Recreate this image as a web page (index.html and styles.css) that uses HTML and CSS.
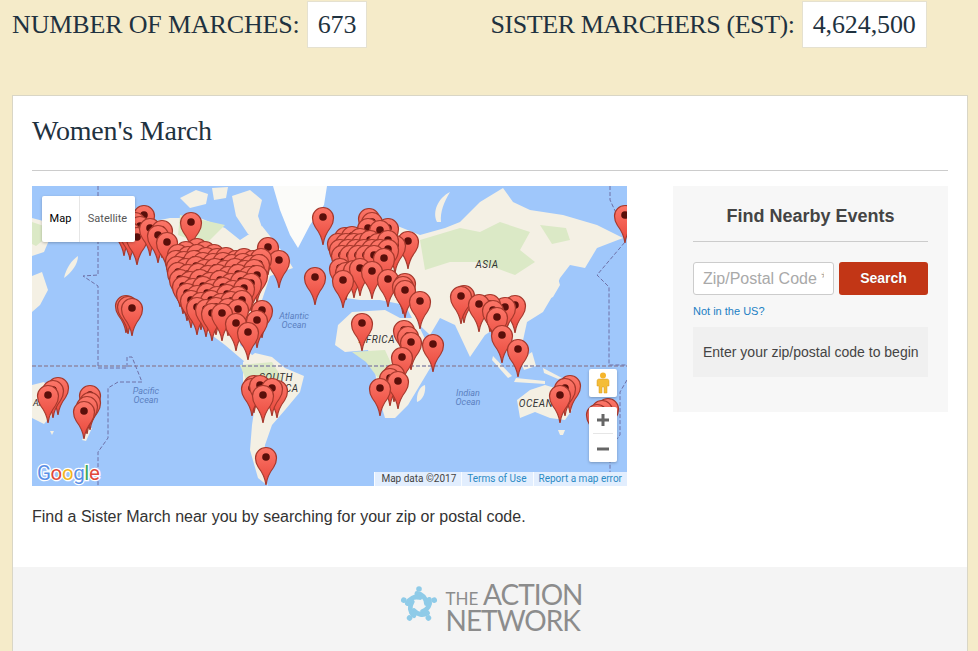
FILE: index.html
```html
<!DOCTYPE html>
<html lang="en">
<head>
    <meta charset="UTF-8">
    <title>Women's March</title>
    <link rel="stylesheet" href="styles.css">
</head>
<body>
<div class="stats">
    <span class="stat-label">NUMBER OF MARCHES:</span>
    <span class="stat-value">673</span>
    <span class="stat-label stat-second">SISTER MARCHERS (EST):</span>
    <span class="stat-value">4,624,500</span>
</div>
<div class="card">
    <div class="card-body">
        <h1>Women's March</h1>
        <div class="columns">
            <div class="left">
                <div class="map">
                    <svg class="map-svg" width="595" height="300" viewBox="32 186 595 300">
                        <defs>
                            <linearGradient id="pinfill" x1="0" y1="0" x2="0" y2="1">
                                <stop offset="0" stop-color="#fc7769"/>
                                <stop offset="1" stop-color="#e8463a"/>
                            </linearGradient>
                            <g id="p">
                                <path d="M0 28C-1 20-4 15-7.500 10.500C-9.500 7.500-10.500 4.500-10.500 1A10.500 10.500 0 0 1 10.500 1C10.500 4.500 9.500 7.500 7.500 10.500C4 15 1 20 0 28Z" fill="url(#pinfill)" stroke="#a5382c" stroke-width="1.200"/>
                                <circle r="3.800" fill="#5a0f0a"/>
                            </g>
                        </defs>
                        <rect x="32" y="186" width="595" height="300" fill="#9fc7fb"/>
                        <g fill="#f4f0e4">
                            <path d="M32 218L47 222L50 238L44 252L32 256Z"/>
                            <path d="M64 278C66 268 72 260 78 256C78 264 72 272 64 278Z"/>
                            <path d="M32 276L42 272L48 290L40 305L32 312Z"/>
                            <path d="M180 198L196 190L208 194L206 204L190 208Z"/>
                            <path d="M212 188L228 187L226 198L214 200Z"/>
                            <path d="M232 196L250 190L262 200L258 216L265 236L248 234L236 216Z"/>
                            <path d="M135 225L170 218L200 218L225 228L240 240L262 226L285 255L293 268L270 276L262 300L245 320L240 345L258 360L245 362L225 345L205 330L185 300L170 265L150 245L135 248Z"/>
                            <path d="M243 362L255 353L272 357L285 368L304 376L300 392L285 410L272 425L265 445L262 470L268 486L258 478L250 450L252 425L255 405L243 385Z"/>
                            <path d="M335 345L338 325L352 312L385 310L400 318L415 318L428 345L443 340L432 365L420 385L408 405L395 418L385 418L378 395L375 370L368 350L345 352Z"/>
                            <path d="M417 402C416 394 420 386 425 385C426 392 423 400 417 402Z"/>
                            <path d="M338 290L345 270L340 250L365 225L395 225L420 235L445 228L460 222L480 202L503 188L513 202L530 210L563 215L597 225L623 238L597 248L585 268L570 265L560 278L553 295L543 312L527 322L522 345L510 345L500 325L485 335L470 357L455 325L440 318L430 335L412 318L405 305L380 300L360 300L345 298Z"/>
                            <path d="M553 297L560 285L556 272L552 284L546 300Z"/>
                            <path d="M437 222C432 212 438 198 450 192C444 202 440 212 441 222Z"/>
                            <path d="M493 356L512 376L508 378L492 360Z"/>
                            <path d="M514 382L545 384L545 381L516 378Z"/>
                            <path d="M520 360L532 352L536 366L524 370Z"/>
                            <path d="M543 368L562 378L558 379L544 373Z"/>
                            <path d="M517 400L530 390L545 385L555 388L565 395L572 410L565 420L550 418L535 412L520 418Z"/>
                            <path d="M558 430L565 430L563 435L560 435Z"/>
                            <path d="M32 385L44 382L55 395L52 415L44 424L32 418Z"/>
                            <path d="M50 431L54 431L52 435Z"/>
                            <path d="M82 440L88 428L92 428L86 441Z"/>
                        </g>
                        <path d="M273 186L327 186L324 205L310 225L298 248L290 235L280 210Z" fill="#fbfbf9"/>
                        <g fill="#dbe9c6">
                            <path d="M32 222L44 226L46 238L36 246L32 244Z"/>
                            <path d="M420 240L460 228L480 232L500 222L530 232L520 250L535 262L515 275L480 262L450 262L425 270Z"/>
                            <path d="M540 225L566 228L570 240L552 244Z"/>
                            <path d="M240 365L272 362L282 378L268 396L248 385Z"/>
                            <path d="M352 352L385 350L395 372L378 378L366 362Z"/>
                            <path d="M498 340L510 345L506 352L497 350Z"/>
                            <path d="M180 215L225 225L205 245L178 235Z"/>
                        </g>
                        <g fill="none" stroke-width="1" stroke-dasharray="4 2">
                            <path stroke="#8f8aa8" stroke-width="1.300" d="M32 366H627"/>
                            <path stroke="#6e70a6" d="M98 186V275L83 276L98 286V368H127V357H132L142 382H118L108 388V438L98 452V486"/>
                            <path stroke="#6e70a6" d="M610 186V200L625 232V242L597 275L609 287V365H627M627 380L620 392V435L610 448V472"/>
                        </g>
                        <g class="map-label">
                            <text x="487" y="268" class="land-label">ASIA</text>
                            <text x="276" y="381" class="land-label">SOUTH</text>
                            <text x="276" y="392" class="land-label">AMERICA</text>
                            <text x="377" y="343" class="land-label">AFRICA</text>
                            <text x="541" y="407" class="land-label">OCEANIA</text>
                            <text x="33" y="406" class="land-label land-start">AA</text>
                            <text x="294" y="319" class="sea-label">Atlantic</text>
                            <text x="294" y="328" class="sea-label">Ocean</text>
                            <text x="146" y="394" class="sea-label">Pacific</text>
                            <text x="146" y="403" class="sea-label">Ocean</text>
                            <text x="468" y="396" class="sea-label">Indian</text>
                            <text x="468" y="405" class="sea-label">Ocean</text>
                        </g>
                        <!-- canada / alaska -->
                        <use href="#p" x="144" y="215"/><use href="#p" x="135" y="222"/><use href="#p" x="124" y="228"/><use href="#p" x="140" y="226"/><use href="#p" x="130" y="232"/><use href="#p" x="137" y="237"/><use href="#p" x="150" y="228"/>
                        <use href="#p" x="191" y="222"/><use href="#p" x="162" y="230"/><use href="#p" x="158" y="235"/><use href="#p" x="167" y="242"/>
                        <use href="#p" x="323" y="217"/><use href="#p" x="315" y="277"/><use href="#p" x="268" y="247"/><use href="#p" x="279" y="260"/>
                        <use href="#p" x="126" y="305"/><use href="#p" x="128" y="306"/><use href="#p" x="132" y="308"/>
                        <!-- usa -->
                        <use href="#p" x="197" y="248"/><use href="#p" x="205" y="251"/><use href="#p" x="186" y="251"/><use href="#p" x="214" y="254"/>
                        <use href="#p" x="178" y="254"/><use href="#p" x="188" y="256"/><use href="#p" x="197" y="254"/><use href="#p" x="206" y="257"/><use href="#p" x="217" y="258"/><use href="#p" x="226" y="257"/><use href="#p" x="236" y="260"/><use href="#p" x="244" y="258"/><use href="#p" x="253" y="260"/><use href="#p" x="261" y="258"/>
                        <use href="#p" x="176" y="260"/><use href="#p" x="184" y="261"/><use href="#p" x="194" y="260"/><use href="#p" x="203" y="262"/><use href="#p" x="213" y="263"/><use href="#p" x="223" y="262"/><use href="#p" x="232" y="264"/><use href="#p" x="243" y="263"/><use href="#p" x="251" y="265"/><use href="#p" x="259" y="264"/>
                        <use href="#p" x="177" y="266"/><use href="#p" x="186" y="268"/><use href="#p" x="196" y="266"/><use href="#p" x="205" y="269"/><use href="#p" x="215" y="268"/><use href="#p" x="225" y="270"/><use href="#p" x="235" y="268"/><use href="#p" x="245" y="270"/><use href="#p" x="254" y="269"/>
                        <use href="#p" x="178" y="272"/><use href="#p" x="188" y="274"/><use href="#p" x="198" y="273"/><use href="#p" x="208" y="275"/><use href="#p" x="218" y="274"/><use href="#p" x="228" y="276"/><use href="#p" x="238" y="274"/><use href="#p" x="249" y="276"/><use href="#p" x="257" y="275"/>
                        <use href="#p" x="180" y="279"/><use href="#p" x="190" y="281"/><use href="#p" x="200" y="279"/><use href="#p" x="210" y="282"/><use href="#p" x="220" y="280"/><use href="#p" x="231" y="283"/><use href="#p" x="241" y="281"/><use href="#p" x="251" y="283"/>
                        <use href="#p" x="183" y="286"/><use href="#p" x="193" y="288"/><use href="#p" x="203" y="286"/><use href="#p" x="213" y="289"/><use href="#p" x="223" y="287"/><use href="#p" x="233" y="290"/><use href="#p" x="244" y="288"/>
                        <use href="#p" x="187" y="293"/><use href="#p" x="197" y="295"/><use href="#p" x="207" y="293"/><use href="#p" x="217" y="296"/><use href="#p" x="227" y="294"/><use href="#p" x="238" y="296"/>
                        <use href="#p" x="191" y="300"/><use href="#p" x="201" y="302"/><use href="#p" x="211" y="300"/><use href="#p" x="221" y="303"/><use href="#p" x="231" y="301"/><use href="#p" x="242" y="300"/>
                        <use href="#p" x="197" y="307"/><use href="#p" x="206" y="309"/><use href="#p" x="216" y="307"/><use href="#p" x="228" y="308"/><use href="#p" x="262" y="310"/>
                        <use href="#p" x="212" y="313"/><use href="#p" x="238" y="309"/><use href="#p" x="222" y="313"/><use href="#p" x="257" y="320"/><use href="#p" x="236" y="323"/><use href="#p" x="248" y="332"/>
                        <!-- europe -->
                        <use href="#p" x="369" y="218"/><use href="#p" x="372" y="222"/><use href="#p" x="368" y="228"/><use href="#p" x="388" y="228"/><use href="#p" x="380" y="230"/><use href="#p" x="408" y="241"/><use href="#p" x="395" y="245"/>
                        <use href="#p" x="345" y="237"/><use href="#p" x="352" y="236"/><use href="#p" x="360" y="238"/>
                        <use href="#p" x="338" y="243"/><use href="#p" x="346" y="243"/><use href="#p" x="354" y="243"/><use href="#p" x="362" y="243"/><use href="#p" x="370" y="240"/><use href="#p" x="378" y="243"/><use href="#p" x="388" y="240"/>
                        <use href="#p" x="340" y="249"/><use href="#p" x="348" y="249"/><use href="#p" x="356" y="249"/><use href="#p" x="364" y="249"/><use href="#p" x="372" y="249"/><use href="#p" x="380" y="249"/><use href="#p" x="388" y="249"/>
                        <use href="#p" x="342" y="255"/><use href="#p" x="350" y="255"/><use href="#p" x="358" y="255"/><use href="#p" x="366" y="255"/><use href="#p" x="374" y="255"/><use href="#p" x="384" y="258"/>
                        <use href="#p" x="340" y="268"/><use href="#p" x="346" y="272"/><use href="#p" x="354" y="270"/><use href="#p" x="360" y="268"/><use href="#p" x="343" y="280"/><use href="#p" x="372" y="271"/><use href="#p" x="388" y="279"/>
                        <use href="#p" x="405" y="283"/><use href="#p" x="403" y="286"/><use href="#p" x="405" y="290"/><use href="#p" x="420" y="301"/>
                        <!-- asia -->
                        <use href="#p" x="464" y="295"/><use href="#p" x="461" y="296"/><use href="#p" x="515" y="305"/><use href="#p" x="505" y="307"/><use href="#p" x="490" y="304"/><use href="#p" x="479" y="304"/><use href="#p" x="493" y="310"/><use href="#p" x="497" y="317"/><use href="#p" x="502" y="335"/><use href="#p" x="518" y="349"/>
                        <use href="#p" x="625" y="215"/>
                        <!-- africa -->
                        <use href="#p" x="362" y="323"/><use href="#p" x="404" y="330"/><use href="#p" x="408" y="336"/><use href="#p" x="411" y="342"/><use href="#p" x="433" y="344"/><use href="#p" x="402" y="357"/>
                        <use href="#p" x="394" y="374"/><use href="#p" x="390" y="378"/><use href="#p" x="398" y="381"/><use href="#p" x="380" y="388"/>
                        <!-- oceania -->
                        <use href="#p" x="570" y="385"/><use href="#p" x="565" y="388"/><use href="#p" x="560" y="395"/>
                        <use href="#p" x="608" y="408"/><use href="#p" x="602" y="410"/><use href="#p" x="597" y="414"/>
                        <use href="#p" x="58" y="387"/><use href="#p" x="53" y="390"/><use href="#p" x="48" y="395"/>
                        <use href="#p" x="90" y="395"/><use href="#p" x="90" y="402"/><use href="#p" x="87" y="406"/><use href="#p" x="84" y="411"/>
                        <!-- south america -->
                        <use href="#p" x="254" y="385"/><use href="#p" x="252" y="388"/><use href="#p" x="260" y="385"/><use href="#p" x="277" y="390"/><use href="#p" x="272" y="388"/><use href="#p" x="263" y="395"/><use href="#p" x="266" y="457"/>
                        <text x="37" y="480" class="google"><tspan fill="#5a8fe6">G</tspan><tspan fill="#e0483a">o</tspan><tspan fill="#f2b51d">o</tspan><tspan fill="#5a8fe6">g</tspan><tspan fill="#3ba757">l</tspan><tspan fill="#e0483a">e</tspan></text>
                    </svg>
                    <div class="map-type">
                        <span class="map-type-on">Map</span>
                        <span class="map-type-off">Satellite</span>
                    </div>
                    <div class="pegman">
                        <svg width="14" height="22" viewBox="0 0 14 22">
                            <circle cx="7" cy="3.500" r="3" fill="#f5b52c"/>
                            <path d="M3 7H11C12.500 7 13 8 13 9.500V14H11V21H8V15H6V21H3V14H1V9.500C1 8 1.500 7 3 7Z" fill="#f4bd38" stroke="#d99a1c" stroke-width=".5"/>
                        </svg>
                    </div>
                    <div class="zoom">
                        <svg class="zoom-btn" width="12" height="12" viewBox="0 0 12 12"><path d="M4.500 0H7.500V4.500H12V7.500H7.500V12H4.500V7.500H0V4.500H4.500Z" fill="#666"/></svg>
                        <div class="zoom-line"></div>
                        <svg class="zoom-btn" width="12" height="12" viewBox="0 0 12 12"><path d="M0 4.500H12V7.500H0Z" fill="#666"/></svg>
                    </div>
                    <div class="attribution">
                        <span class="attr-data">Map data ©2017</span>
                        <span class="attr-link attr-terms">Terms of Use</span>
                        <span class="attr-link">Report a map error</span>
                    </div>
                </div>
                <p class="intro">Find a Sister March near you by searching for your zip or postal code.</p>
            </div>
            <div class="panel">
                <h2>Find Nearby Events</h2>
                <form class="search">
                    <input type="text" placeholder="Zip/Postal Code *">
                    <button type="button">Search</button>
                </form>
                <a class="not-us" href="#">Not in the US?</a>
                <div class="message">Enter your zip/postal code to begin</div>
            </div>
        </div>
    </div>
    <div class="footer">
        <svg class="logo-icon" width="38" height="38" viewBox="-19 -19 38 38">
            <defs>
                <g id="arm">
                    <circle cx="0" cy="-16" r="2.800"/>
                    <path d="M-2-11.500C3-11 7-7 7.500-1.500" fill="none" stroke="#8fcbe8" stroke-width="5" stroke-linecap="round"/>
                </g>
            </defs>
            <g fill="#8fcbe8">
                <use href="#arm"/>
                <use href="#arm" transform="rotate(72)"/>
                <use href="#arm" transform="rotate(144)"/>
                <use href="#arm" transform="rotate(216)"/>
                <use href="#arm" transform="rotate(288)"/>
            </g>
        </svg>
        <div class="logo-text">
            <div class="logo-top"><span class="logo-the">THE</span> <span class="logo-action">ACTION</span></div>
            <div class="logo-network">NETWORK</div>
        </div>
    </div>
</div>
</body>
</html>
```

FILE: styles.css
```css
*{
    margin: 0;
    padding: 0;
    box-sizing: border-box;
}
html,body{
    height: 651px;
    overflow: hidden;
}
body{
    background: #f5ebc9;
    font-family: "Liberation Sans", Arial, sans-serif;
    color: #444;
}
.stats{
    display: flex;
    align-items: center;
    height: 48px;
    padding-left: 12px;
    padding-top: 1px;
    margin-bottom: 47px;
    font-family: "Liberation Serif", serif;
    color: #1f3240;
}
.stat-label{
    font-size: 26px;
    letter-spacing: -.15px;
    margin-right: 7px;
}
.stat-second{
    margin-left: 123px;
    letter-spacing: -.42px;
}
.stat-value{
    height: 47px;
    line-height: 45px;
    padding: 0 10px;
    background: #fff;
    border: 1px solid #e5e1d0;
    font-size: 26px;
    letter-spacing: -.1px;
}
.card{
    margin: 0 10px 0 12px;
    background: #fff;
    border: 1px solid #d9d6c6;
    height: 560px;
}
.card-body{
    height: 471px;
    padding: 0 19px;
}
h1{
    height: 75px;
    padding-top: 18px;
    border-bottom: 1px solid #ccc;
    font-family: "Liberation Serif", serif;
    font-weight: normal;
    font-size: 28px;
    line-height: 34px;
    letter-spacing: -.2px;
    color: #1f3240;
}
.columns{
    display: flex;
    justify-content: space-between;
    padding-top: 15px;
}
.left{
    width: 595px;
}
.map{
    position: relative;
    width: 595px;
    height: 300px;
    overflow: hidden;
}
.map-svg{
    display: block;
}
.land-label{
    font: italic 10px "Roboto", sans-serif;
    letter-spacing: .5px;
    fill: #333;
    text-anchor: middle;
}
.land-start{
    font-size: 9px;
    letter-spacing: 0;
    text-anchor: start;
}
.sea-label{
    font: italic 9px "Roboto", sans-serif;
    fill: #5b7fc0;
    text-anchor: middle;
}
.google{
    font: 400 20.500px "Roboto", sans-serif;
    letter-spacing: -.4px;
    stroke: #fff;
    stroke-width: 2.500px;
    paint-order: stroke;
}
.map-type{
    position: absolute;
    left: 10px;
    top: 10px;
    display: flex;
    height: 46px;
    background: #fff;
    border-radius: 2px;
    box-shadow: 0 1px 3px rgba(0,0,0,.25);
    font: 11px/46px "Roboto", sans-serif;
}
.map-type-on{
    width: 38px;
    text-align: center;
    color: #000;
    border-right: 1px solid #e6e6e6;
}
.map-type-off{
    width: 55px;
    text-align: center;
    color: #565656;
}
.pegman{
    position: absolute;
    left: 557px;
    top: 183px;
    display: flex;
    align-items: center;
    justify-content: center;
    width: 28px;
    height: 28px;
    background: #fff;
    border-radius: 2px;
    box-shadow: 0 1px 3px rgba(0,0,0,.25);
}
.zoom{
    position: absolute;
    left: 557px;
    top: 221px;
    display: flex;
    flex-direction: column;
    align-items: center;
    width: 28px;
    height: 55px;
    padding-top: 7px;
    background: #fff;
    border-radius: 2px;
    box-shadow: 0 1px 3px rgba(0,0,0,.25);
}
.zoom-line{
    width: 20px;
    height: 1px;
    margin: 7px 0 9px;
    background: #e6e6e6;
}
.attribution{
    position: absolute;
    right: 0;
    bottom: 0;
    display: flex;
    height: 14px;
    background: rgba(255,255,255,.7);
    font: 10px/14px "Roboto", sans-serif;
}
.attribution span{
    padding: 0 5px;
    border-left: 1px solid rgba(255,255,255,.8);
}
.attribution .attr-data{
    padding-left: 6px;
    color: #444;
}
.attribution .attr-terms{
    padding-right: 6px;
}
.attr-link{
    color: #2a8ac4;
}
.intro{
    margin-top: 22px;
    font-size: 16px;
    line-height: 18px;
    color: #333;
}
.panel{
    width: 275px;
    height: 226px;
    padding: 20px;
    background: #f7f7f7;
}
h2{
    height: 36px;
    border-bottom: 1px solid #ccc;
    text-align: center;
    font-size: 18px;
    line-height: 20px;
    color: #444;
}
.search{
    display: flex;
    gap: 5px;
    margin-top: 20px;
}
.search input{
    width: 141px;
    height: 33px;
    padding: 0 9px;
    border: 1px solid #ccc;
    border-radius: 3px;
    background: #fff;
    font: 16px "Liberation Sans", Arial, sans-serif;
}
.search input::placeholder{
    color: #a9a9a9;
}
.search button{
    width: 89px;
    height: 33px;
    padding-bottom: 2px;
    border: 0;
    border-radius: 3px;
    background: #c23616;
    color: #fff;
    font: bold 14px "Liberation Sans", Arial, sans-serif;
    text-shadow: 0 0 1px rgba(0,0,0,.3);
}
.not-us{
    display: block;
    margin-top: 9px;
    font-size: 11px;
    line-height: 14px;
    color: #1b80c4;
    text-decoration: none;
}
.message{
    height: 50px;
    margin-top: 9px;
    padding-left: 10px;
    background: #f0f0f0;
    font-size: 14px;
    line-height: 50px;
    white-space: nowrap;
    color: #444;
}
.footer{
    display: flex;
    justify-content: center;
    align-items: center;
    gap: 8px;
    height: 84px;
    padding-left: 2px;
    padding-bottom: 5px;
    background: #f4f4f4;
}
.logo-icon{
    margin-bottom: 3px;
}
.logo-text{
    font-family: "Lato", sans-serif;
    color: #8c8c8c;
}
.logo-top{
    display: flex;
    align-items: baseline;
    gap: 5px;
    line-height: 24px;
    margin-bottom: -2px;
}
.logo-the{
    font-size: 17px;
    letter-spacing: -.1px;
}
.logo-action{
    font-size: 28px;
    letter-spacing: -1px;
}
.logo-network{
    font-size: 28px;
    line-height: 22px;
    letter-spacing: -1px;
}
```
